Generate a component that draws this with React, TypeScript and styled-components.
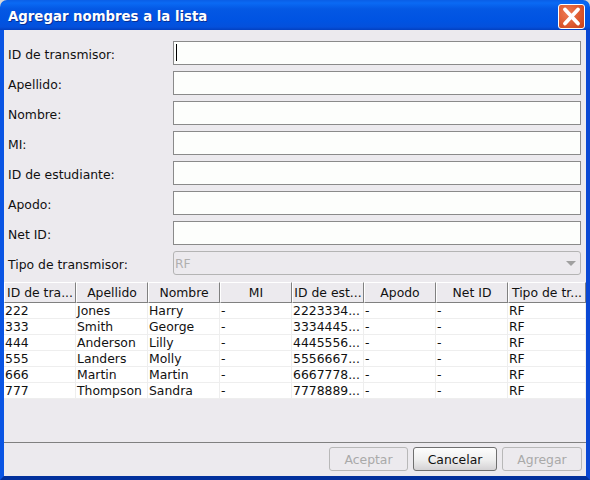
import React from 'react';
import styled, { createGlobalStyle } from 'styled-components';

const FIELDS = ['ID de transmisor:', 'Apellido:', 'Nombre:', 'MI:', 'ID de estudiante:', 'Apodo:', 'Net ID:'];
const COLUMNS = ['ID de tra...', 'Apellido', 'Nombre', 'MI', 'ID de est...', 'Apodo', 'Net ID', 'Tipo de tr...'];
const ROWS = [
    ['222', 'Jones', 'Harry', '-', '2223334...', '-', '-', 'RF'],
    ['333', 'Smith', 'George', '-', '3334445...', '-', '-', 'RF'],
    ['444', 'Anderson', 'Lilly', '-', '4445556...', '-', '-', 'RF'],
    ['555', 'Landers', 'Molly', '-', '5556667...', '-', '-', 'RF'],
    ['666', 'Martin', 'Martin', '-', '6667778...', '-', '-', 'RF'],
    ['777', 'Thompson', 'Sandra', '-', '7778889...', '-', '-', 'RF'],
];

const App = () => {
    return (
        <Dialog>
            <GlobalStyle />
            <TitleBar>
                <Title>Agregar nombres a la lista</Title>
                <CloseButton>
                    <svg width="25" height="23" viewBox="0 0 25 23">
                        <path d="M6 4.5 L19 18.5 M19 4.5 L6 18.5" stroke="#fff" strokeWidth="3.8" strokeLinecap="round" />
                    </svg>
                </CloseButton>
            </TitleBar>
            <Body>
                <Form>
                    {FIELDS.map((label, index) => (
                        <FormRow key={label}>
                            <Label>{label}</Label>
                            <InputBox $focused={index === 0} />
                        </FormRow>
                    ))}
                    <FormRow>
                        <Label>Tipo de transmisor:</Label>
                        <SelectBox>
                            <SelectValue>RF</SelectValue>
                            <SelectArrow />
                        </SelectBox>
                    </FormRow>
                </Form>
                <TableArea>
                    <TableGrid>
                        {COLUMNS.map(column => (
                            <HeaderCell key={column}>{column}</HeaderCell>
                        ))}
                        {ROWS.flatMap((row, rowIndex) =>
                            row.map((cell, cellIndex) => (
                                <Cell key={`${rowIndex}-${cellIndex}`}>{cell}</Cell>
                            ))
                        )}
                    </TableGrid>
                </TableArea>
                <Footer>
                    <FooterButton $width={79} disabled>Aceptar</FooterButton>
                    <FooterButton $width={84}>Cancelar</FooterButton>
                    <FooterButton $width={80} disabled>Agregar</FooterButton>
                </Footer>
            </Body>
        </Dialog>
    );
};

export default App;

// ---------------------------
const GlobalStyle = createGlobalStyle`
  html, body {
    margin: 0;
    padding: 0;
    background: #d8d8d8;
  }
  * {
    box-sizing: border-box;
  }
`

const Dialog = styled.div`
  width: 590px;
  height: 480px;
  display: flex;
  flex-direction: column;
  font-family: "DejaVu Sans", sans-serif;
  font-size: 12.4px;
  color: #111;
  overflow: hidden;
  border-radius: 7px 7px 0 0;
`

const TitleBar = styled.div`
  height: 30px;
  flex: none;
  display: flex;
  align-items: center;
  justify-content: space-between;
  padding: 2px 5px 0 8px;
  background: linear-gradient(180deg, #0a5ee6 0%, #0a6af4 10%, #0458e4 30%, #0053e2 70%, #0450dc 90%, #0340c0 100%);
`

const Title = styled.div`
  color: #fff;
  font-size: 13.3px;
  font-weight: 700;
  text-shadow: 1px 1px 0 #0a2f94;
`

const CloseButton = styled.div`
  width: 27px;
  height: 25px;
  display: flex;
  border: 1px solid #fff;
  border-radius: 3px;
  background: radial-gradient(circle at 35% 35%, #ee7c55 0%, #de5a30 55%, #c63e18 100%);
`

const Body = styled.div`
  flex: 1;
  display: flex;
  flex-direction: column;
  min-height: 0;
  background: #eceaee;
  border-left: 4px solid #0a55e4;
  border-right: 4px solid #0a48d4;
  border-bottom: 4px solid #02309c;
`

const Form = styled.div`
  display: flex;
  flex-direction: column;
  gap: 6px;
  padding: 11px 5px 7px 4px;
`

const FormRow = styled.div`
  display: grid;
  grid-template-columns: 165px 1fr;
  align-items: center;
  height: 24px;
`

const Label = styled.div`
  white-space: nowrap;
  padding-top: 2px;
`

const InputBox = styled.div<{ $focused?: boolean }>`
  position: relative;
  height: 24px;
  background: #fdfefc;
  border: 1px solid #8a8a8a;

  &::after {
    content: "";
    display: ${props => props.$focused ? 'block' : 'none'};
    position: absolute;
    left: 2px;
    top: 2px;
    width: 1px;
    height: 17px;
    background: #000;
  }
`

const SelectBox = styled.div`
  height: 24px;
  display: flex;
  align-items: center;
  justify-content: space-between;
  padding: 0 3px 0 1px;
  border: 1px solid #b4b4b4;
  border-radius: 3px;
  background: #eceaee;
`

const SelectValue = styled.div`
  color: #b0b0b0;
`

const SelectArrow = styled.div`
  width: 0;
  height: 0;
  margin-right: 1px;
  border-left: 5px solid transparent;
  border-right: 5px solid transparent;
  border-top: 5px solid #a0a0a0;
`

const TableArea = styled.div`
  flex: 1;
  min-height: 0;
  border-bottom: 1px solid #808080;
`

const TableGrid = styled.div`
  display: grid;
  grid-template-columns: repeat(7, 72px) 1fr;
  grid-auto-rows: 16px;
  grid-template-rows: 21px;
`

const HeaderCell = styled.div`
  display: flex;
  align-items: center;
  justify-content: center;
  white-space: nowrap;
  overflow: hidden;
  background: #eceaee;
  border-top: 1px solid #fff;
  border-left: 1px solid #fff;
  border-right: 1px solid #808080;
  border-bottom: 1px solid #808080;
`

const Cell = styled.div`
  padding-left: 1px;
  line-height: 15px;
  white-space: nowrap;
  overflow: hidden;
  background: #fff;
  border-right: 1px solid #eeeeee;
  border-bottom: 1px solid #eeeeee;
`

const Footer = styled.div`
  height: 33px;
  flex: none;
  display: flex;
  justify-content: flex-end;
  align-items: flex-start;
  gap: 5px;
  padding: 4px 4px 0 0;
`

const FooterButton = styled.button<{ $width: number }>`
  width: ${props => props.$width}px;
  height: 24px;
  padding: 0;
  font-family: inherit;
  font-size: 12.4px;
  color: #111;
  border: 1px solid #6f6f6f;
  border-radius: 3px;
  background: linear-gradient(180deg, #fdfdfd 0%, #eeeeee 55%, #d4d2d4 100%);

  &:disabled {
    color: #a9a9a9;
    border-color: #b8b8b8;
    background: #eceaee;
  }
`
